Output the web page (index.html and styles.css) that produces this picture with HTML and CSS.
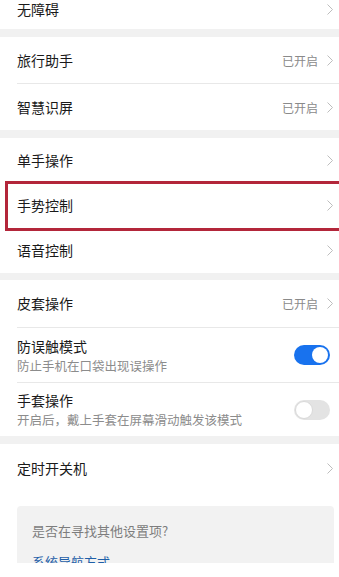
FILE: index.html
```html
<!DOCTYPE html>
<html lang="zh-CN">
<head>
<meta charset="utf-8">
<title>辅助功能</title>
<link rel="stylesheet" href="styles.css">
</head>
<body>
<div class="page">
  <div class="group">
    <div class="row row-first">
      <div class="row-body">
        <span class="label">无障碍</span>
        <svg class="chev" width="6" height="11" viewBox="0 0 6 11"><polyline points="0.5,0.5 5.5,5.5 0.5,10.5"/></svg>
      </div>
    </div>
  </div>
  <div class="gap"></div>
  <div class="group">
    <div class="row h46">
      <div class="row-body">
        <span class="label">旅行助手</span>
        <span class="value">已开启</span>
        <svg class="chev" width="6" height="11" viewBox="0 0 6 11"><polyline points="0.5,0.5 5.5,5.5 0.5,10.5"/></svg>
      </div>
    </div>
    <div class="row h47 sep">
      <div class="row-body">
        <span class="label">智慧识屏</span>
        <span class="value">已开启</span>
        <svg class="chev" width="6" height="11" viewBox="0 0 6 11"><polyline points="0.5,0.5 5.5,5.5 0.5,10.5"/></svg>
      </div>
    </div>
  </div>
  <div class="gap"></div>
  <div class="group">
    <div class="row h45">
      <div class="row-body">
        <span class="label">单手操作</span>
        <svg class="chev" width="6" height="11" viewBox="0 0 6 11"><polyline points="0.5,0.5 5.5,5.5 0.5,10.5"/></svg>
      </div>
    </div>
    <div class="row h45 highlighted">
      <div class="row-body">
        <span class="label">手势控制</span>
        <svg class="chev" width="6" height="11" viewBox="0 0 6 11"><polyline points="0.5,0.5 5.5,5.5 0.5,10.5"/></svg>
      </div>
    </div>
    <div class="row h45">
      <div class="row-body">
        <span class="label">语音控制</span>
        <svg class="chev" width="6" height="11" viewBox="0 0 6 11"><polyline points="0.5,0.5 5.5,5.5 0.5,10.5"/></svg>
      </div>
    </div>
  </div>
  <div class="gap gap7"></div>
  <div class="group">
    <div class="row h47">
      <div class="row-body">
        <span class="label">皮套操作</span>
        <span class="value">已开启</span>
        <svg class="chev" width="6" height="11" viewBox="0 0 6 11"><polyline points="0.5,0.5 5.5,5.5 0.5,10.5"/></svg>
      </div>
    </div>
    <div class="row h55 sep">
      <div class="row-body">
        <div class="texts">
          <span class="label">防误触模式</span>
          <span class="sub">防止手机在口袋出现误操作</span>
        </div>
        <span class="toggle on"><span class="knob"></span></span>
      </div>
    </div>
    <div class="row h54 sep">
      <div class="row-body">
        <div class="texts">
          <span class="label">手套操作</span>
          <span class="sub">开启后，戴上手套在屏幕滑动触发该模式</span>
        </div>
        <span class="toggle off"><span class="knob"></span></span>
      </div>
    </div>
  </div>
  <div class="gap"></div>
  <div class="group">
    <div class="row h48">
      <div class="row-body">
        <span class="label">定时开关机</span>
        <svg class="chev" width="6" height="11" viewBox="0 0 6 11"><polyline points="0.5,0.5 5.5,5.5 0.5,10.5"/></svg>
      </div>
    </div>
  </div>
  <div class="card">
    <div class="card-q">是否在寻找其他设置项?</div>
    <div class="card-link">系统导航方式</div>
  </div>
</div>
</body>
</html>
```

FILE: styles.css
```css
html, body {
  margin: 0;
  padding: 0;
  background: #ffffff;
}

body {
  width: 339px;
  height: 577px;
  overflow: hidden;
  font-family: "Noto Sans CJK SC", "Noto Sans", sans-serif;
  color: #1a1a1a;
}

.page {
  display: flex;
  flex-direction: column;
}

.group {
  background: #ffffff;
  display: flex;
  flex-direction: column;
}

.gap {
  height: 8px;
  background: #f1f1f1;
}

.gap7 {
  height: 7px;
}

.row {
  position: relative;
  display: flex;
  padding-left: 17px;
  box-sizing: border-box;
}

.row-first {
  height: 40px;
  margin-top: -11px;
}

.h45 { height: 45px; }
.h46 { height: 46px; }
.h47 { height: 47px; }
.h48 { height: 48px; }
.h54 { height: 54px; }
.h55 { height: 55px; }

.row-body {
  flex: 1;
  display: flex;
  align-items: center;
  padding-right: 6px;
  box-sizing: border-box;
}

.sep .row-body {
  border-top: 1px solid #e8e8e8;
}

.label {
  font-size: 14px;
  line-height: 19px;
  color: #1a1a1a;
  flex: 1;
}

.texts {
  flex: 1;
  display: flex;
  flex-direction: column;
  gap: 1px;
}

.texts .label {
  flex: none;
}

.sub {
  font-size: 12.5px;
  line-height: 17px;
  color: #8c8c8c;
}

.value {
  font-size: 12px;
  color: #8a8a8a;
  margin-right: 9px;
}

.chev {
  display: block;
}

.chev polyline {
  fill: none;
  stroke: #bdbdbd;
  stroke-width: 1;
}

.highlighted::after {
  content: "";
  position: absolute;
  left: 5px;
  right: -3px;
  top: -2px;
  bottom: -3px;
  border: 3px solid #b3263a;
}

.toggle {
  position: relative;
  width: 36px;
  height: 20px;
  border-radius: 10px;
  margin-right: 3px;
  box-sizing: border-box;
  flex: none;
}

.toggle.on {
  background: #1872ee;
}

.toggle.off {
  background: #e3e3e3;
}

.knob {
  position: absolute;
  top: 2px;
  width: 16px;
  height: 16px;
  border-radius: 50%;
  background: #ffffff;
}

.on .knob {
  right: 2px;
}

.off .knob {
  left: 1px;
  top: 1px;
  width: 18px;
  height: 18px;
  box-sizing: border-box;
  border: 1px solid #d9d9d9;
}

.card {
  margin: 14px 5px 0 17px;
  height: 57px;
  overflow: hidden;
  background: #f2f2f2;
  border-radius: 4px 4px 0 0;
  padding: 16px 15px 0 15px;
  box-sizing: border-box;
}

.card-q {
  font-size: 13px;
  line-height: 17px;
  color: #7d7d7d;
}

.card-link {
  margin-top: 14px;
  font-size: 13px;
  line-height: 17px;
  color: #1f5fa8;
}
```
